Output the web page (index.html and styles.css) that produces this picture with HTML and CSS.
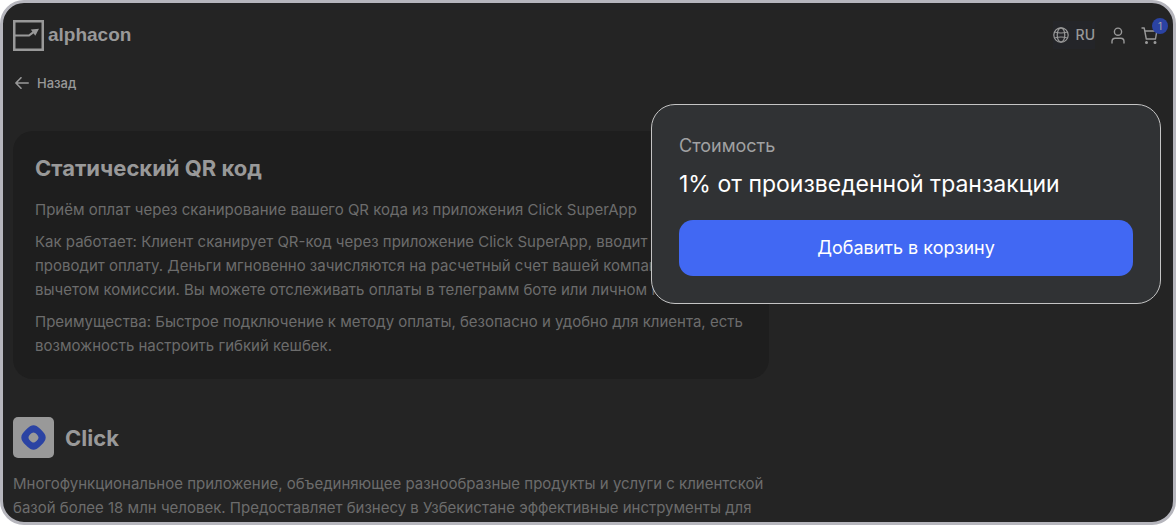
FILE: index.html
```html
<!DOCTYPE html>
<html lang="ru">
<head>
  <meta charset="UTF-8" />
  <meta name="viewport" content="width=device-width, initial-scale=1" />
  <title>Статический QR код — alphacon</title>
  <link rel="stylesheet" href="styles.css">
</head>
<body>

<div class="page">
  <header class="header">
    <a class="logo" href="#">
      <svg width="31" height="31" viewBox="0 0 31 31" fill="none" aria-hidden="true">
        <rect x="1.25" y="1.25" width="28.5" height="28.5" stroke="currentColor" stroke-width="2.5" />
        <path d="M2 15.5h14l5.500-4.200" stroke="currentColor" stroke-width="2.2" />
        <path d="M17.800 9.500l8.200-.8-3.700 7.100z" fill="currentColor" />
      </svg>
      <span>alphacon</span>
    </a>
    <nav class="actions">
      <button class="lang" type="button">
        <svg width="16" height="16" viewBox="0 0 16 16" fill="none" stroke="currentColor" stroke-width="1.2" aria-hidden="true">
          <circle cx="8" cy="8" r="7.2" />
          <ellipse cx="8" cy="8" rx="3.8" ry="7.2" />
          <path d="M1.7 5c3.8 1.2 8.8 1.2 12.6 0M1.7 11c3.8-1.2 8.8-1.2 12.6 0" />
        </svg>
        RU
      </button>
      <a class="icon-link" href="#" aria-label="Профиль">
        <svg width="14" height="17" viewBox="0 0 14 17" fill="none" stroke="currentColor" stroke-width="1.4" stroke-linecap="round" aria-hidden="true">
          <circle cx="7" cy="4.7" r="3.6" />
          <path d="M1 16v-1.6c0-2 1.4-3.2 3.2-3.2h5.6c1.8 0 3.2 1.2 3.2 3.2V16" />
        </svg>
      </a>
      <a class="icon-link cart" href="#" aria-label="Корзина">
        <svg width="17" height="17" viewBox="0 0 17 17" fill="none" stroke="currentColor" stroke-width="1.4" stroke-linecap="round" stroke-linejoin="round" aria-hidden="true">
          <path d="M1 1h2.2l2.1 11h9.2M3.7 4h12.1l-1.300 8" />
          <circle cx="5.5" cy="15.4" r=".8" fill="currentColor" />
          <circle cx="14" cy="15.4" r=".8" fill="currentColor" />
        </svg>
        <span class="badge">1</span>
      </a>
    </nav>
  </header>

  <a class="back" href="#">
    <svg width="14" height="12" viewBox="0 0 14 12" fill="none" stroke="currentColor" stroke-width="1.6" stroke-linecap="round" stroke-linejoin="round" aria-hidden="true">
      <path d="M13.2 6H1M6 .8L.9 6 6 11.2" />
    </svg>
    Назад
  </a>

  <main class="layout">
    <div class="content">
      <section class="service">
        <h1>Статический QR код</h1>
        <p>Приём оплат через сканирование вашего QR кода из приложения Click SuperApp</p>
        <p>Как работает: Клиент сканирует QR-код через приложение Click SuperApp, вводит сумму и проводит оплату. Деньги мгновенно зачисляются на расчетный счет вашей компании за вычетом комиссии. Вы можете отслеживать оплаты в телеграмм боте или личном кабинете.</p>
        <p>Преимущества: Быстрое подключение к методу оплаты, безопасно и удобно для клиента, есть возможность настроить гибкий кешбек.</p>
      </section>

      <section class="provider">
        <div class="provider-head">
          <svg class="provider-logo" width="41" height="41" viewBox="0 0 41 41" aria-hidden="true">
            <rect width="41" height="41" rx="5" fill="#999" />
            <path fill="#2b43a3" fill-rule="evenodd" d="M20.500 8.300c2.200 0 3.800 1 6 3l1.800 1.600c2.700 2.600 4.400 4.800 4.400 7.600s-1.700 5-4.400 7.600l-1.800 1.600c-2.200 2-3.800 3-6 3s-3.800-1-6-3l-1.800-1.600c-2.700-2.600-4.400-4.800-4.400-7.600s1.700-5 4.400-7.600l1.800-1.600c2.200-2 3.800-3 6-3zM20.500 15.400c-1.900 0-5 3.100-5 5.100s3.100 5.100 5 5.100 5-3.100 5-5.100-3.100-5.100-5-5.100z" />
          </svg>
          <h2>Click</h2>
        </div>
        <p>Многофункциональное приложение, объединяющее разнообразные продукты и услуги с клиентской базой более 18 млн человек. Предоставляет бизнесу в Узбекистане эффективные инструменты для</p>
      </section>
    </div>
  </main>

  <aside class="price-card">
    <div class="price-label">Стоимость</div>
    <div class="price-value">1% от произведенной транзакции</div>
    <button class="add-btn" type="button">Добавить в корзину</button>
  </aside>
</div>

</body>
</html>
```
FILE: styles.css
```css
* {
  box-sizing: border-box;
}
body {
  margin: 0;
  background: #fff;
  font-family: Inter, 'Liberation Sans', sans-serif;
  color: #999;
}
h1, h2, p {
  margin: 0;
}
a {
  color: inherit;
  text-decoration: none;
}
button {
  font-family: inherit;
  border: none;
  cursor: pointer;
}
svg {
  display: block;
  flex-shrink: 0;
}
.page {
  position: relative;
  min-height: 100vh;
  padding: 16px 10px 0;
  background: #242424;
  border: 3px solid #b6b6bd;
  border-radius: 24px;
}
.header {
  display: flex;
  justify-content: space-between;
  align-items: center;
  height: 32px;
}
.logo {
  display: flex;
  align-items: center;
  gap: 4px;
  font-family: 'Liberation Sans', Arial, sans-serif;
  font-size: 19px;
  font-weight: 700;
  line-height: 28px;
}
.actions {
  display: flex;
  align-items: center;
  gap: 16px;
  padding-right: 5px;
}
.lang {
  display: flex;
  align-items: center;
  gap: 7px;
  padding: 4px 0;
  background: #242529;
  color: #999;
  font-size: 14px;
  font-weight: 500;
  line-height: 20px;
}
.cart {
  position: relative;
}
.badge {
  position: absolute;
  top: -9px;
  right: -10px;
  width: 16px;
  height: 16px;
  border-radius: 50%;
  background: #2b43a3;
  color: #aaa;
  font-size: 10px;
  line-height: 16px;
  text-align: center;
}
.back {
  display: inline-flex;
  align-items: center;
  gap: 8px;
  margin-top: 22px;
  padding-left: 2px;
  font-size: 13px;
  font-weight: 500;
  line-height: 20px;
}
.layout {
  display: grid;
  grid-template-columns: 2fr 1fr;
  gap: 16px;
  margin-top: 38px;
}
.service {
  display: flex;
  flex-direction: column;
  gap: 8px;
  padding: 21px 22px;
  border-radius: 20px;
  background: #1e1e1e;
}
.service h1 {
  margin-bottom: 6px;
  font-size: 22px;
  font-weight: 700;
  line-height: 32px;
}
.service p,
.provider p {
  color: #6c6c6c;
  font-size: 15px;
  line-height: 24px;
}
.provider {
  margin-top: 38px;
}
.provider-head {
  display: flex;
  align-items: center;
  gap: 11px;
  margin-bottom: 14px;
}
.provider h2 {
  font-size: 22px;
  font-weight: 700;
  line-height: 32px;
}
/* Карточка с ценой поверх контента */
.price-card {
  position: absolute;
  top: 101px;
  right: 12px;
  width: 510px;
  max-width: calc(100% - 24px);
  padding: 27px;
  border: 1px solid #c4c4c4;
  border-radius: 24px;
  background: #303234;
}
.price-label {
  color: #a0a1a2;
  font-size: 18px;
  line-height: 28px;
}
.price-value {
  margin-top: 8px;
  color: #fff;
  font-size: 23px;
  line-height: 32px;
}
.add-btn {
  width: 100%;
  margin-top: 20px;
  padding: 14px;
  border-radius: 14px;
  background: #4168f3;
  color: #fff;
  font-size: 18px;
  line-height: 28px;
}
```
